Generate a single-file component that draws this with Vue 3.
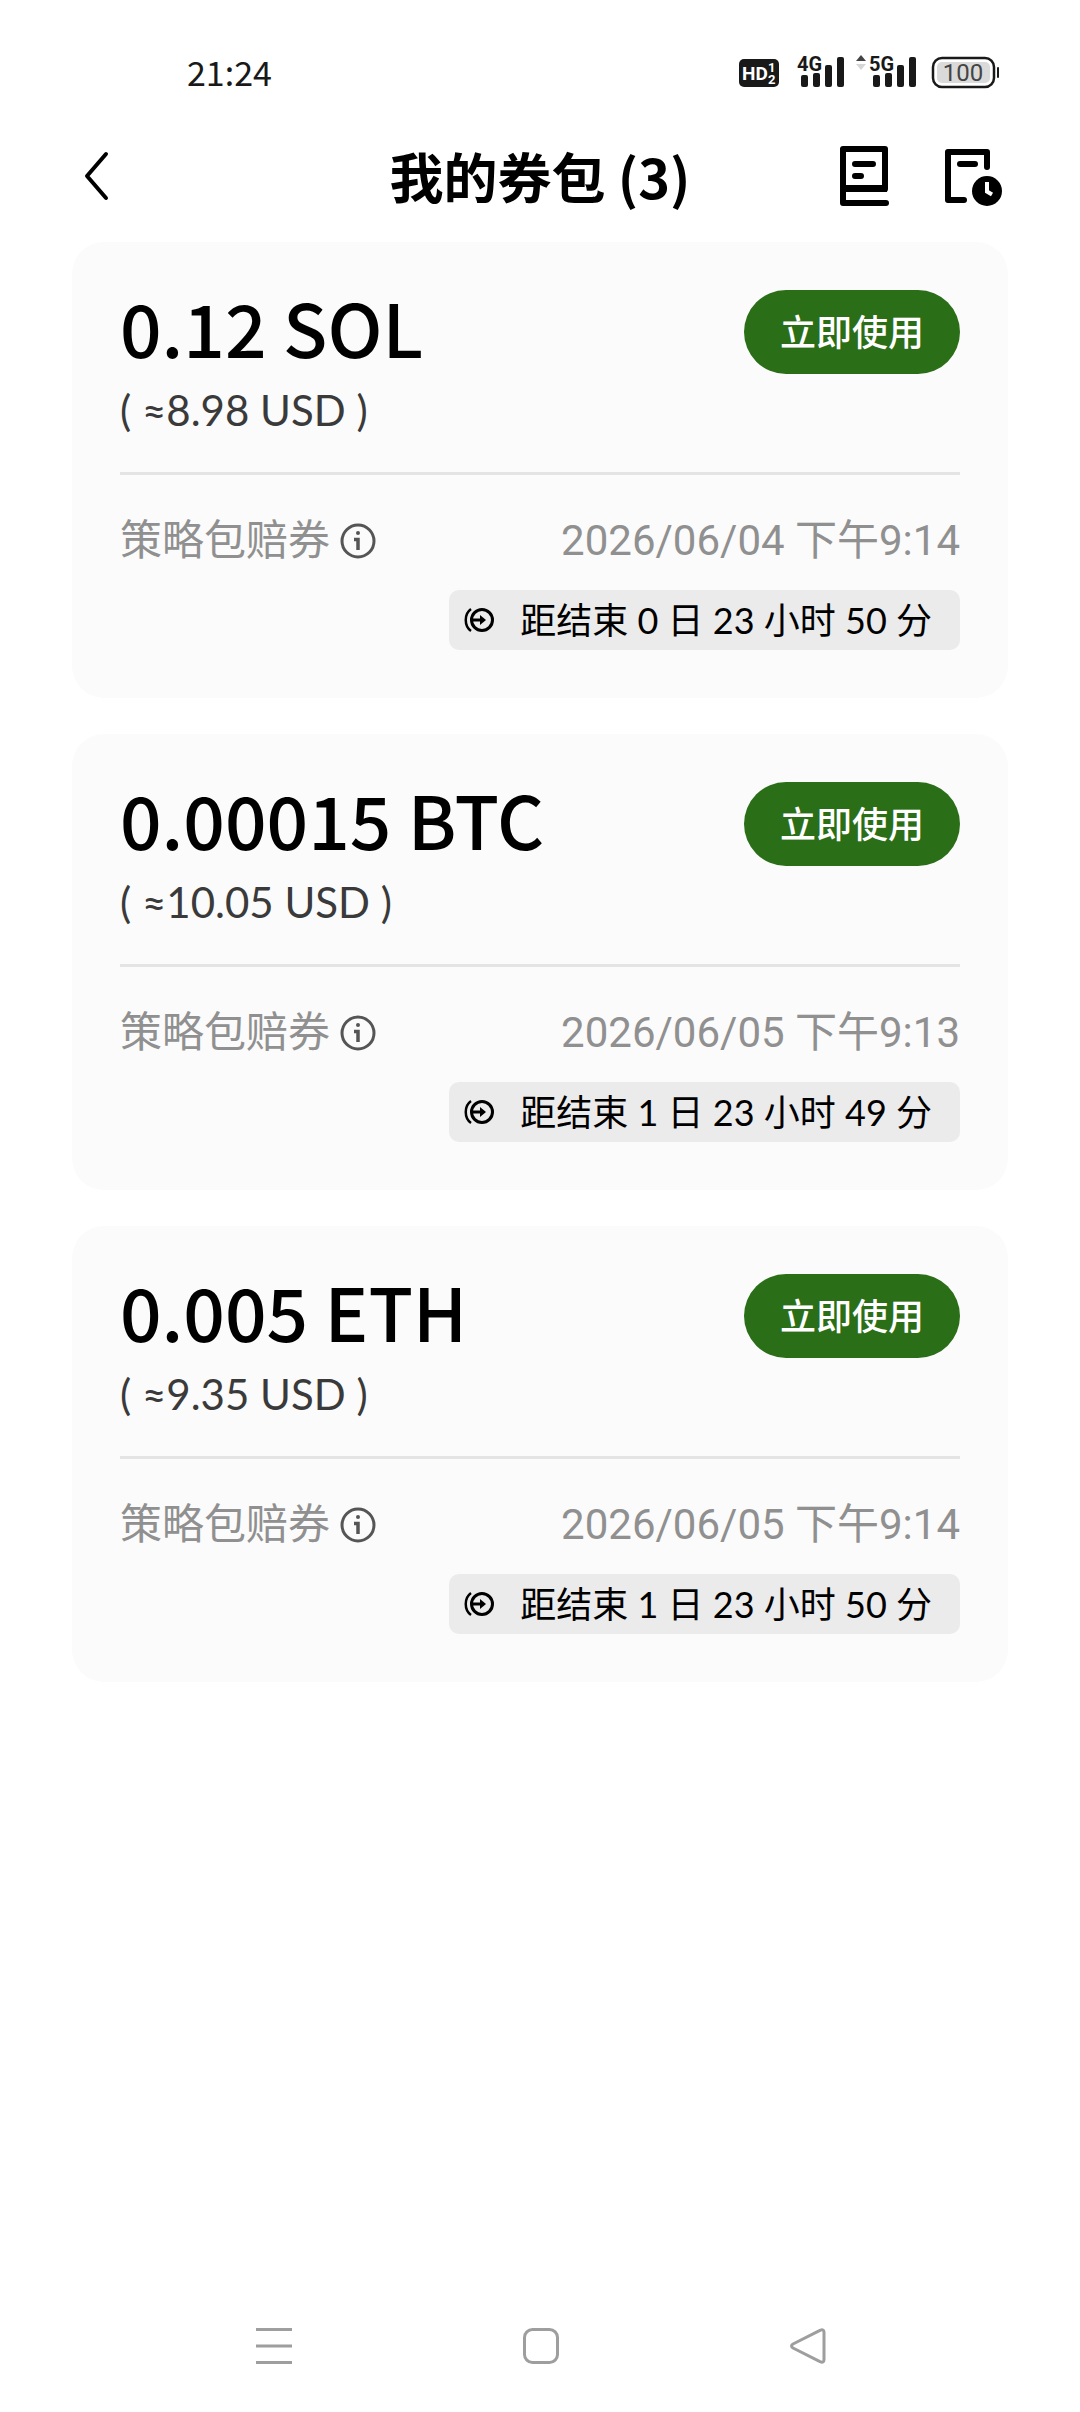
<script setup>
import { ref, computed } from 'vue';

const coupons = ref([
    { id: 1, amount: '0.12 SOL', usd: '8.98', name: '策略包赔券', date: '2026/06/04 下午9:14', left: { days: 0, hours: 23, minutes: 50 } },
    { id: 2, amount: '0.00015 BTC', usd: '10.05', name: '策略包赔券', date: '2026/06/05 下午9:13', left: { days: 1, hours: 23, minutes: 49 } },
    { id: 3, amount: '0.005 ETH', usd: '9.35', name: '策略包赔券', date: '2026/06/05 下午9:14', left: { days: 1, hours: 23, minutes: 50 } },
]);

const title = computed(() => `我的券包 (${coupons.value.length})`);

const timeLeft = ({ days, hours, minutes }) => `距结束 ${days} 日 ${hours} 小时 ${minutes} 分`;
</script>

<template>
    <div class="page">
        <div class="status">
            <time class="status__time">21:24</time>
            <svg class="status__icons" width="262" height="36" viewBox="0 0 262 36">
                <!-- HD -->
                <rect x="1" y="5" width="40" height="28" rx="5" fill="#191919" />
                <text x="4" y="26" class="status__hd">HD</text>
                <text x="30" y="18" class="status__sim">1</text>
                <text x="30" y="30" class="status__sim">2</text>
                <!-- 4G -->
                <text x="59" y="17" class="status__net">4G</text>
                <g fill="#191919">
                    <rect x="63" y="21" width="7" height="12" rx="2" />
                    <rect x="75" y="19" width="7" height="14" rx="2" />
                    <rect x="87" y="11" width="7" height="22" rx="2" />
                    <rect x="99" y="3" width="7" height="30" rx="2" />
                </g>
                <!-- 5G -->
                <path d="M118 7l5-6 5 6z" fill="#444" />
                <path d="M118 10l5 6 5-6z" fill="#d6d6d6" />
                <text x="131" y="17" class="status__net">5G</text>
                <g fill="#191919">
                    <rect x="135" y="21" width="7" height="12" rx="2" />
                    <rect x="147" y="19" width="7" height="14" rx="2" />
                    <rect x="159" y="11" width="7" height="22" rx="2" />
                    <rect x="171" y="3" width="7" height="30" rx="2" />
                </g>
                <!-- battery -->
                <rect x="195" y="4" width="61" height="29" rx="9" fill="#fff" stroke="#191919" stroke-width="2.5" />
                <rect x="199" y="8" width="53" height="21" rx="5" fill="#dadada" />
                <rect x="259" y="13" width="2" height="11" rx="1" fill="#191919" />
                <text x="225" y="27" text-anchor="middle" class="status__battery">100</text>
            </svg>
        </div>

        <header class="header">
            <button class="header__btn header__btn--back" type="button" aria-label="返回">
                <svg width="24" height="48" viewBox="0 0 24 48">
                    <path d="M22 2L3 24l19 22" fill="none" stroke="#000" stroke-width="4" stroke-linecap="round"
                        stroke-linejoin="round" />
                </svg>
            </button>
            <h1 class="header__title">{{ title }}</h1>
            <div class="header__actions">
                <button class="header__btn" type="button" aria-label="规则">
                    <svg width="48" height="60" viewBox="0 0 48 60">
                        <path d="M3 42V3h42v40M3 40v17h43" fill="none" stroke="#000" stroke-width="6"
                            stroke-linejoin="round" stroke-linecap="round" />
                        <path d="M3 42.500h44" stroke="#000" stroke-width="7" />
                        <path d="M15 18h18M15 30h6" stroke="#000" stroke-width="6" stroke-linecap="round" />
                    </svg>
                </button>
                <button class="header__btn" type="button" aria-label="历史">
                    <svg width="57" height="60" viewBox="0 0 57 60">
                        <path d="M19 54H3V6h39v15" fill="none" stroke="#000" stroke-width="6" stroke-linejoin="round"
                            stroke-linecap="round" />
                        <path d="M15 18h15" stroke="#000" stroke-width="6" stroke-linecap="round" />
                        <circle cx="42" cy="45" r="15" fill="#000" />
                        <path d="M42 36v9.500l5 3" fill="none" stroke="#fff" stroke-width="4" />
                    </svg>
                </button>
            </div>
        </header>

        <main class="list">
            <article v-for="coupon in coupons" :key="coupon.id" class="coupon">
                <div class="coupon__top">
                    <div>
                        <h2 class="coupon__amount">{{ coupon.amount }}</h2>
                        <p class="coupon__usd">( ≈{{ coupon.usd }} USD )</p>
                    </div>
                    <button class="coupon__use" type="button">立即使用</button>
                </div>

                <div class="coupon__row">
                    <span class="coupon__name">{{ coupon.name }}</span>
                    <button class="coupon__info" type="button" aria-label="说明">
                        <svg width="36" height="36" viewBox="0 0 36 36">
                            <circle cx="18" cy="18" r="16" fill="none" stroke="#555" stroke-width="3" />
                            <circle cx="18" cy="10" r="2" fill="#555" />
                            <path d="M14 16.500h4V27" fill="none" stroke="#555" stroke-width="3.500" />
                        </svg>
                    </button>
                    <time class="coupon__date">{{ coupon.date }}</time>
                </div>

                <div class="coupon__left">
                    <svg width="30" height="26" viewBox="0 0 30 26">
                        <circle cx="18" cy="13" r="10.500" fill="none" stroke="#000" stroke-width="3" />
                        <path d="M7 2C0 7 0 19 7 24" fill="none" stroke="#000" stroke-width="2.500" />
                        <path d="M8 13h10" stroke="#000" stroke-width="3" />
                        <path d="M16 8l6 5-6 5z" fill="#000" />
                    </svg>
                    <span>{{ timeLeft(coupon.left) }}</span>
                </div>
            </article>
        </main>

        <nav class="nav">
            <button class="nav__btn" type="button" aria-label="菜单">
                <svg width="36" height="36" viewBox="0 0 36 36">
                    <path d="M0 1.500h36M0 18h36M0 34.500h36" stroke="#9e9e9e" stroke-width="3" />
                </svg>
            </button>
            <button class="nav__btn" type="button" aria-label="主页">
                <svg width="36" height="36" viewBox="0 0 36 36">
                    <rect x="1.500" y="1.500" width="33" height="33" rx="8" fill="none" stroke="#9e9e9e"
                        stroke-width="3" />
                </svg>
            </button>
            <button class="nav__btn" type="button" aria-label="后退">
                <svg width="36" height="36" viewBox="0 0 36 36">
                    <path d="M30 2.300L3 16q-3 2 0 4l27 13.700q4 1.500 4-2V4.300q0-3.500-4-2z" fill="none"
                        stroke="#9e9e9e" stroke-width="3" stroke-linejoin="round" />
                </svg>
            </button>
        </nav>
    </div>
</template>

<style>
body {
    background: #fff;
}
</style>

<style scoped>
.page {
    display: flex;
    flex-direction: column;
    box-sizing: border-box;
    min-height: 100vh;
    font-family: "Noto Sans CJK SC", sans-serif;
    color: #000;
}

button {
    padding: 0;
    border: 0;
    background: none;
    font-family: inherit;
}

svg {
    display: block;
    overflow: visible;
}

.status {
    display: flex;
    align-items: center;
    justify-content: space-between;
    padding: 52px 80px 0 187px;
}

.status__time {
    color: #191919;
    font-size: 34px;
    line-height: 40px;
}

.status__hd,
.status__sim,
.status__net {
    font-family: Roboto, sans-serif;
    font-weight: 700;
    fill: #191919;
}

.status__hd {
    font-size: 19px;
    fill: #fff;
}

.status__sim {
    font-size: 13px;
    fill: #fff;
}

.status__net {
    font-size: 20px;
}

.status__battery {
    font-family: Roboto, sans-serif;
    font-size: 24px;
    fill: #444;
}

.header {
    display: grid;
    grid-template-columns: 1fr auto 1fr;
    align-items: center;
    padding: 36px 78px 18px;
}

.header__title {
    margin: 0;
    font-size: 54px;
    font-weight: 700;
    line-height: 96px;
}

.header__btn {
    justify-self: start;
}

.header__btn--back {
    padding-left: 6px;
}

.header__actions {
    display: flex;
    justify-content: flex-end;
    gap: 57px;
}

.list {
    display: flex;
    flex-direction: column;
    flex: 1;
    gap: 36px;
    padding: 0 72px;
}

.coupon {
    display: flex;
    flex-direction: column;
    padding: 48px;
    border-radius: 32px;
    background: #fbfbfb;
}

.coupon__top {
    display: flex;
    align-items: flex-start;
    justify-content: space-between;
    padding-bottom: 34px;
    border-bottom: 3px solid #e4e4e4;
}

.coupon__amount {
    margin: 0;
    font-size: 73px;
    font-weight: 500;
    line-height: 72px;
}

.coupon__usd {
    margin: 20px 0 0;
    color: #3a3a3a;
    font-family: Lato, "Noto Sans CJK SC", sans-serif;
    font-size: 42px;
    line-height: 56px;
}

.coupon__use {
    padding: 0 36px 4px;
    border-radius: 42px;
    background: #2b6e18;
    color: #fff;
    font-size: 36px;
    font-weight: 500;
    line-height: 80px;
}

.coupon__row {
    display: flex;
    align-items: center;
    padding: 36px 0 19px;
    color: #909090;
    font-family: Roboto, "Noto Sans CJK SC", sans-serif;
    font-size: 42px;
    line-height: 60px;
}

.coupon__info {
    margin-left: 10px;
}

.coupon__date {
    margin-left: auto;
}

.coupon__left {
    display: flex;
    align-items: center;
    align-self: flex-end;
    gap: 26px;
    padding: 0 28px 0 15px;
    border-radius: 10px;
    background: #ebebeb;
    font-family: Lato, "Noto Sans CJK SC", sans-serif;
    font-size: 36px;
    line-height: 60px;
}

.nav {
    display: flex;
    justify-content: space-between;
    padding: 48px 254px 48px 256px;
}
</style>
